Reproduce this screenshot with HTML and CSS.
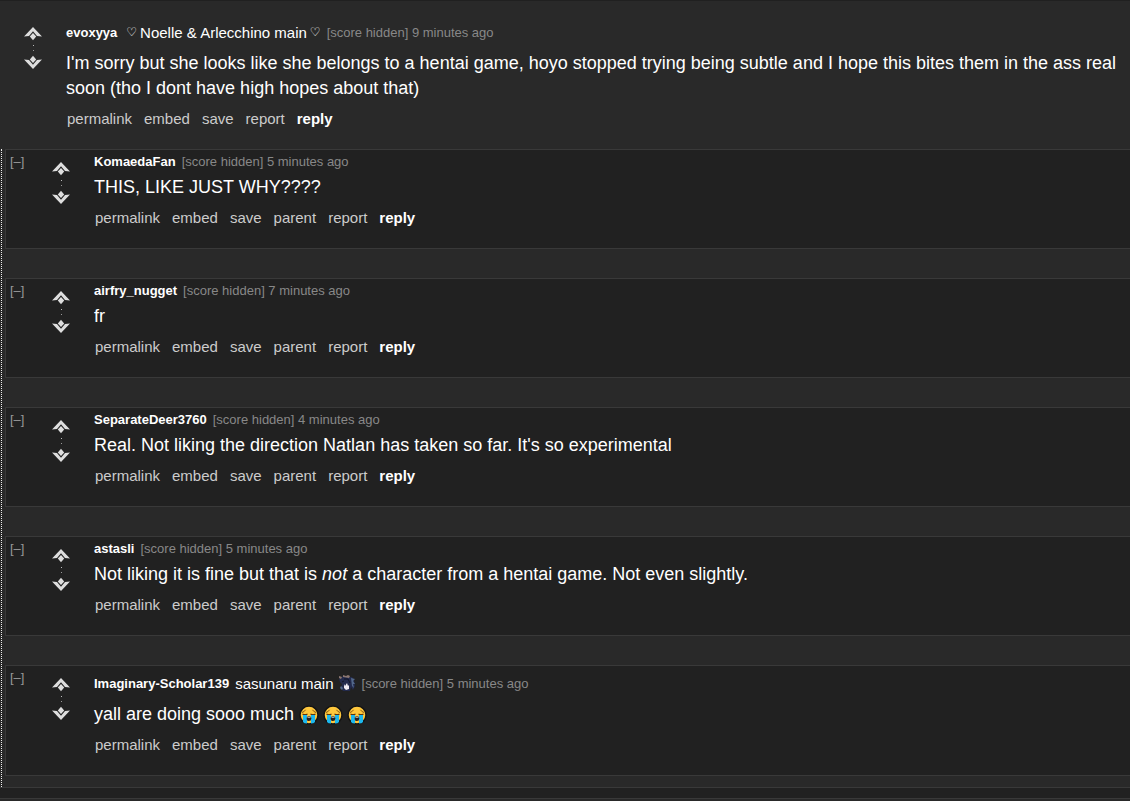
FILE: index.html
```
<!DOCTYPE html>
<html lang="en">
<head>
<meta charset="utf-8">
<meta name="viewport" content="width=device-width, initial-scale=1">
<title>Comments</title>
<link rel="stylesheet" href="styles.css">
</head>
<body>
<svg class="defs" aria-hidden="true">
  <symbol id="arrow" viewBox="0 0 18 14">
    <path d="M9 0 18 9.500 13 9 9 4.300 5 9 0 9.500Z"/>
    <path d="M9 6 12.200 9.500 9 13.200 5.800 9.500Z"/>
  </symbol>
  <symbol id="sob" viewBox="0 0 20 20">
    <circle cx="10" cy="10" r="9" fill="#ffc83d" stroke="#151515" stroke-width="1.500"/>
    <path d="M3 7.500Q5.500 6.800 6.500 4.800M17 7.500Q14.500 6.800 13.500 4.800" fill="none" stroke="#8a5710" stroke-width="1"/>
    <path d="M3.500 9Q6 10.500 8.500 9M11.500 9Q14 10.500 16.500 9" fill="none" stroke="#5b3510" stroke-width="1.300"/>
    <path d="M4 10H8V18.500Q5 18.500 4 17ZM12 10H16V17Q15 18.500 12 18.500Z" fill="#1cb8ee"/>
    <ellipse cx="10" cy="13.500" rx="2.300" ry="2.600" fill="#2b211d"/>
    <path d="M8.500 12.200H11.500" stroke="#ddd" stroke-width="1"/>
  </symbol>
</svg>
<main class="thread">
  <article class="comment root">
    <div class="votes">
      <button class="vote" aria-label="Upvote"><svg class="arrow"><use href="#arrow"/></svg></button>
      <span class="dots"></span>
      <button class="vote" aria-label="Downvote"><svg class="arrow down"><use href="#arrow"/></svg></button>
    </div>
    <div class="entry">
      <p class="tagline tall"><a class="author" href="#">evoxyya</a><span class="flair"><span class="heart">♡</span> Noelle &amp; Arlecchino main <span class="heart">♡</span></span><span class="meta">[score hidden] 9 minutes ago</span></p>
      <p class="text">I'm sorry but she looks like she belongs to a hentai game, hoyo stopped trying being subtle and I hope this bites them in the ass real soon (tho I dont have high hopes about that)</p>
      <nav class="actions"><a href="#">permalink</a><a href="#">embed</a><a href="#">save</a><a href="#">report</a><a class="reply" href="#">reply</a></nav>
    </div>
  </article>
  <section class="children">
    <article class="comment child">
      <button class="collapse">[–]</button>
      <div class="votes">
        <button class="vote" aria-label="Upvote"><svg class="arrow"><use href="#arrow"/></svg></button>
        <span class="dots"></span>
        <button class="vote" aria-label="Downvote"><svg class="arrow down"><use href="#arrow"/></svg></button>
      </div>
      <div class="entry">
        <p class="tagline"><a class="author" href="#">KomaedaFan</a><span class="meta">[score hidden] 5 minutes ago</span></p>
        <p class="text">THIS, LIKE JUST WHY????</p>
        <nav class="actions"><a href="#">permalink</a><a href="#">embed</a><a href="#">save</a><a href="#">parent</a><a href="#">report</a><a class="reply" href="#">reply</a></nav>
      </div>
    </article>
    <article class="comment child">
      <button class="collapse">[–]</button>
      <div class="votes">
        <button class="vote" aria-label="Upvote"><svg class="arrow"><use href="#arrow"/></svg></button>
        <span class="dots"></span>
        <button class="vote" aria-label="Downvote"><svg class="arrow down"><use href="#arrow"/></svg></button>
      </div>
      <div class="entry">
        <p class="tagline"><a class="author" href="#">airfry_nugget</a><span class="meta">[score hidden] 7 minutes ago</span></p>
        <p class="text">fr</p>
        <nav class="actions"><a href="#">permalink</a><a href="#">embed</a><a href="#">save</a><a href="#">parent</a><a href="#">report</a><a class="reply" href="#">reply</a></nav>
      </div>
    </article>
    <article class="comment child">
      <button class="collapse">[–]</button>
      <div class="votes">
        <button class="vote" aria-label="Upvote"><svg class="arrow"><use href="#arrow"/></svg></button>
        <span class="dots"></span>
        <button class="vote" aria-label="Downvote"><svg class="arrow down"><use href="#arrow"/></svg></button>
      </div>
      <div class="entry">
        <p class="tagline"><a class="author" href="#">SeparateDeer3760</a><span class="meta">[score hidden] 4 minutes ago</span></p>
        <p class="text">Real. Not liking the direction Natlan has taken so far. It's so experimental</p>
        <nav class="actions"><a href="#">permalink</a><a href="#">embed</a><a href="#">save</a><a href="#">parent</a><a href="#">report</a><a class="reply" href="#">reply</a></nav>
      </div>
    </article>
    <article class="comment child">
      <button class="collapse">[–]</button>
      <div class="votes">
        <button class="vote" aria-label="Upvote"><svg class="arrow"><use href="#arrow"/></svg></button>
        <span class="dots"></span>
        <button class="vote" aria-label="Downvote"><svg class="arrow down"><use href="#arrow"/></svg></button>
      </div>
      <div class="entry">
        <p class="tagline"><a class="author" href="#">astasli</a><span class="meta">[score hidden] 5 minutes ago</span></p>
        <p class="text">Not liking it is fine but that is <em>not</em> a character from a hentai game. Not even slightly.</p>
        <nav class="actions"><a href="#">permalink</a><a href="#">embed</a><a href="#">save</a><a href="#">parent</a><a href="#">report</a><a class="reply" href="#">reply</a></nav>
      </div>
    </article>
    <article class="comment child">
      <button class="collapse">[–]</button>
      <div class="votes">
        <button class="vote" aria-label="Upvote"><svg class="arrow"><use href="#arrow"/></svg></button>
        <span class="dots"></span>
        <button class="vote" aria-label="Downvote"><svg class="arrow down"><use href="#arrow"/></svg></button>
      </div>
      <div class="entry">
        <p class="tagline tall"><a class="author" href="#">Imaginary-Scholar139</a><span class="flair">sasunaru main <svg class="avatar" viewBox="0 0 18 18" role="img" aria-label="Character flair">
          <path d="M1 5 5 2 10 3 14 3 16 6 17 12 15 16 13 13 12 17 5 17 3 14 4 10 2 8Z" fill="#232a4c"/>
          <path d="M1 2 4 3 3 5 1 4ZM5 1 8 2 10 1 12 2 11 4 5 3Z" fill="#8b7771"/>
          <path d="M6 10 7 12 9 9 10 12 11 11 11 15 8 16 6 14Z" fill="#f0ebf3"/>
          <path d="M13 4 17 5 15 7 17 10 15 10 16 14 14 12ZM3 12 5 14 4 16 2 14Z" fill="#526789"/>
          <path d="M6 5 10 5 12 9M4 8 6 7" fill="none" stroke="#101426" stroke-width="1"/>
        </svg></span><span class="meta">[score hidden] 5 minutes ago</span></p>
        <p class="text">yall are doing sooo much <span class="emojis"><svg class="emoji" role="img" aria-label="Crying face"><use href="#sob"/></svg><svg class="emoji" role="img" aria-label="Crying face"><use href="#sob"/></svg><svg class="emoji" role="img" aria-label="Crying face"><use href="#sob"/></svg></span></p>
        <nav class="actions"><a href="#">permalink</a><a href="#">embed</a><a href="#">save</a><a href="#">parent</a><a href="#">report</a><a class="reply" href="#">reply</a></nav>
      </div>
    </article>
  </section>
</main>
<div class="divider"></div>
</body>
</html>
```
FILE: styles.css
```
* { box-sizing: border-box; }
body {
  margin: 0;
  background: #292929;
  color: #fff;
  font-family: "Liberation Sans", Arial, sans-serif;
}
a { color: inherit; text-decoration: none; }
p { margin: 0; }
button { padding: 0; border: 0; background: none; color: inherit; font: inherit; cursor: pointer; }
.defs { position: absolute; width: 0; height: 0; }
.thread { border-top: 1px solid #202020; }
.comment { display: flex; align-items: flex-start; }
.root { padding: 16px 10px 20px 24px; }
.votes {
  display: flex;
  flex-direction: column;
  align-items: center;
  flex: none;
  width: 18px;
  margin: 10px 24px 0 0;
}
.vote { display: block; height: 14px; }
.arrow { display: block; width: 18px; height: 14px; fill: #dedede; }
.down { transform: scaleY(-1); }
.dots {
  width: 1px;
  height: 6px;
  margin: 4px 0;
  border-top: 1px solid #bbb;
  border-bottom: 1px solid #999;
}
.entry { flex: 1; min-width: 0; }
.tagline {
  display: flex;
  align-items: center;
  height: 19px;
  margin-bottom: 4px;
  font-size: 13px;
  line-height: 19px;
}
.tall { height: 30px; }
.author { font-weight: bold; }
.flair { display: flex; align-items: center; gap: 4px; margin-left: 6px; font-size: 15px; }
.root .flair { gap: 3px; margin-left: 9px; }
.heart { font-family: "DejaVu Sans", sans-serif; font-size: 12px; font-weight: bold; }
.avatar { width: 18px; height: 18px; }
.meta { margin-left: 6px; color: #888; }
.text { font-size: 18px; line-height: 25px; }
.emojis { display: inline-flex; gap: 4px; vertical-align: -5px; }
.emoji { width: 20px; height: 20px; }
.actions {
  display: flex;
  gap: 12px;
  margin-top: 8px;
  padding-left: 1px;
  color: #ccc;
  font-size: 15px;
  line-height: 20px;
}
.reply { color: #fff; font-weight: bold; }
.children {
  display: flex;
  flex-direction: column;
  gap: 29px;
  margin-left: 1px;
  padding: 0 0 11px 3px;
  border-left: 1px dotted #eee;
}
.child {
  padding: 2px 10px 20px 4px;
  border: 1px solid #393939;
  border-right: 0;
  background: #212121;
}
.collapse { flex: none; width: 42px; color: #999; font-size: 13px; line-height: 20px; text-align: left; }
.divider { height: 12px; border-top: 1px solid #393939; border-bottom: 1px solid #393939; background: #212121; }
```
